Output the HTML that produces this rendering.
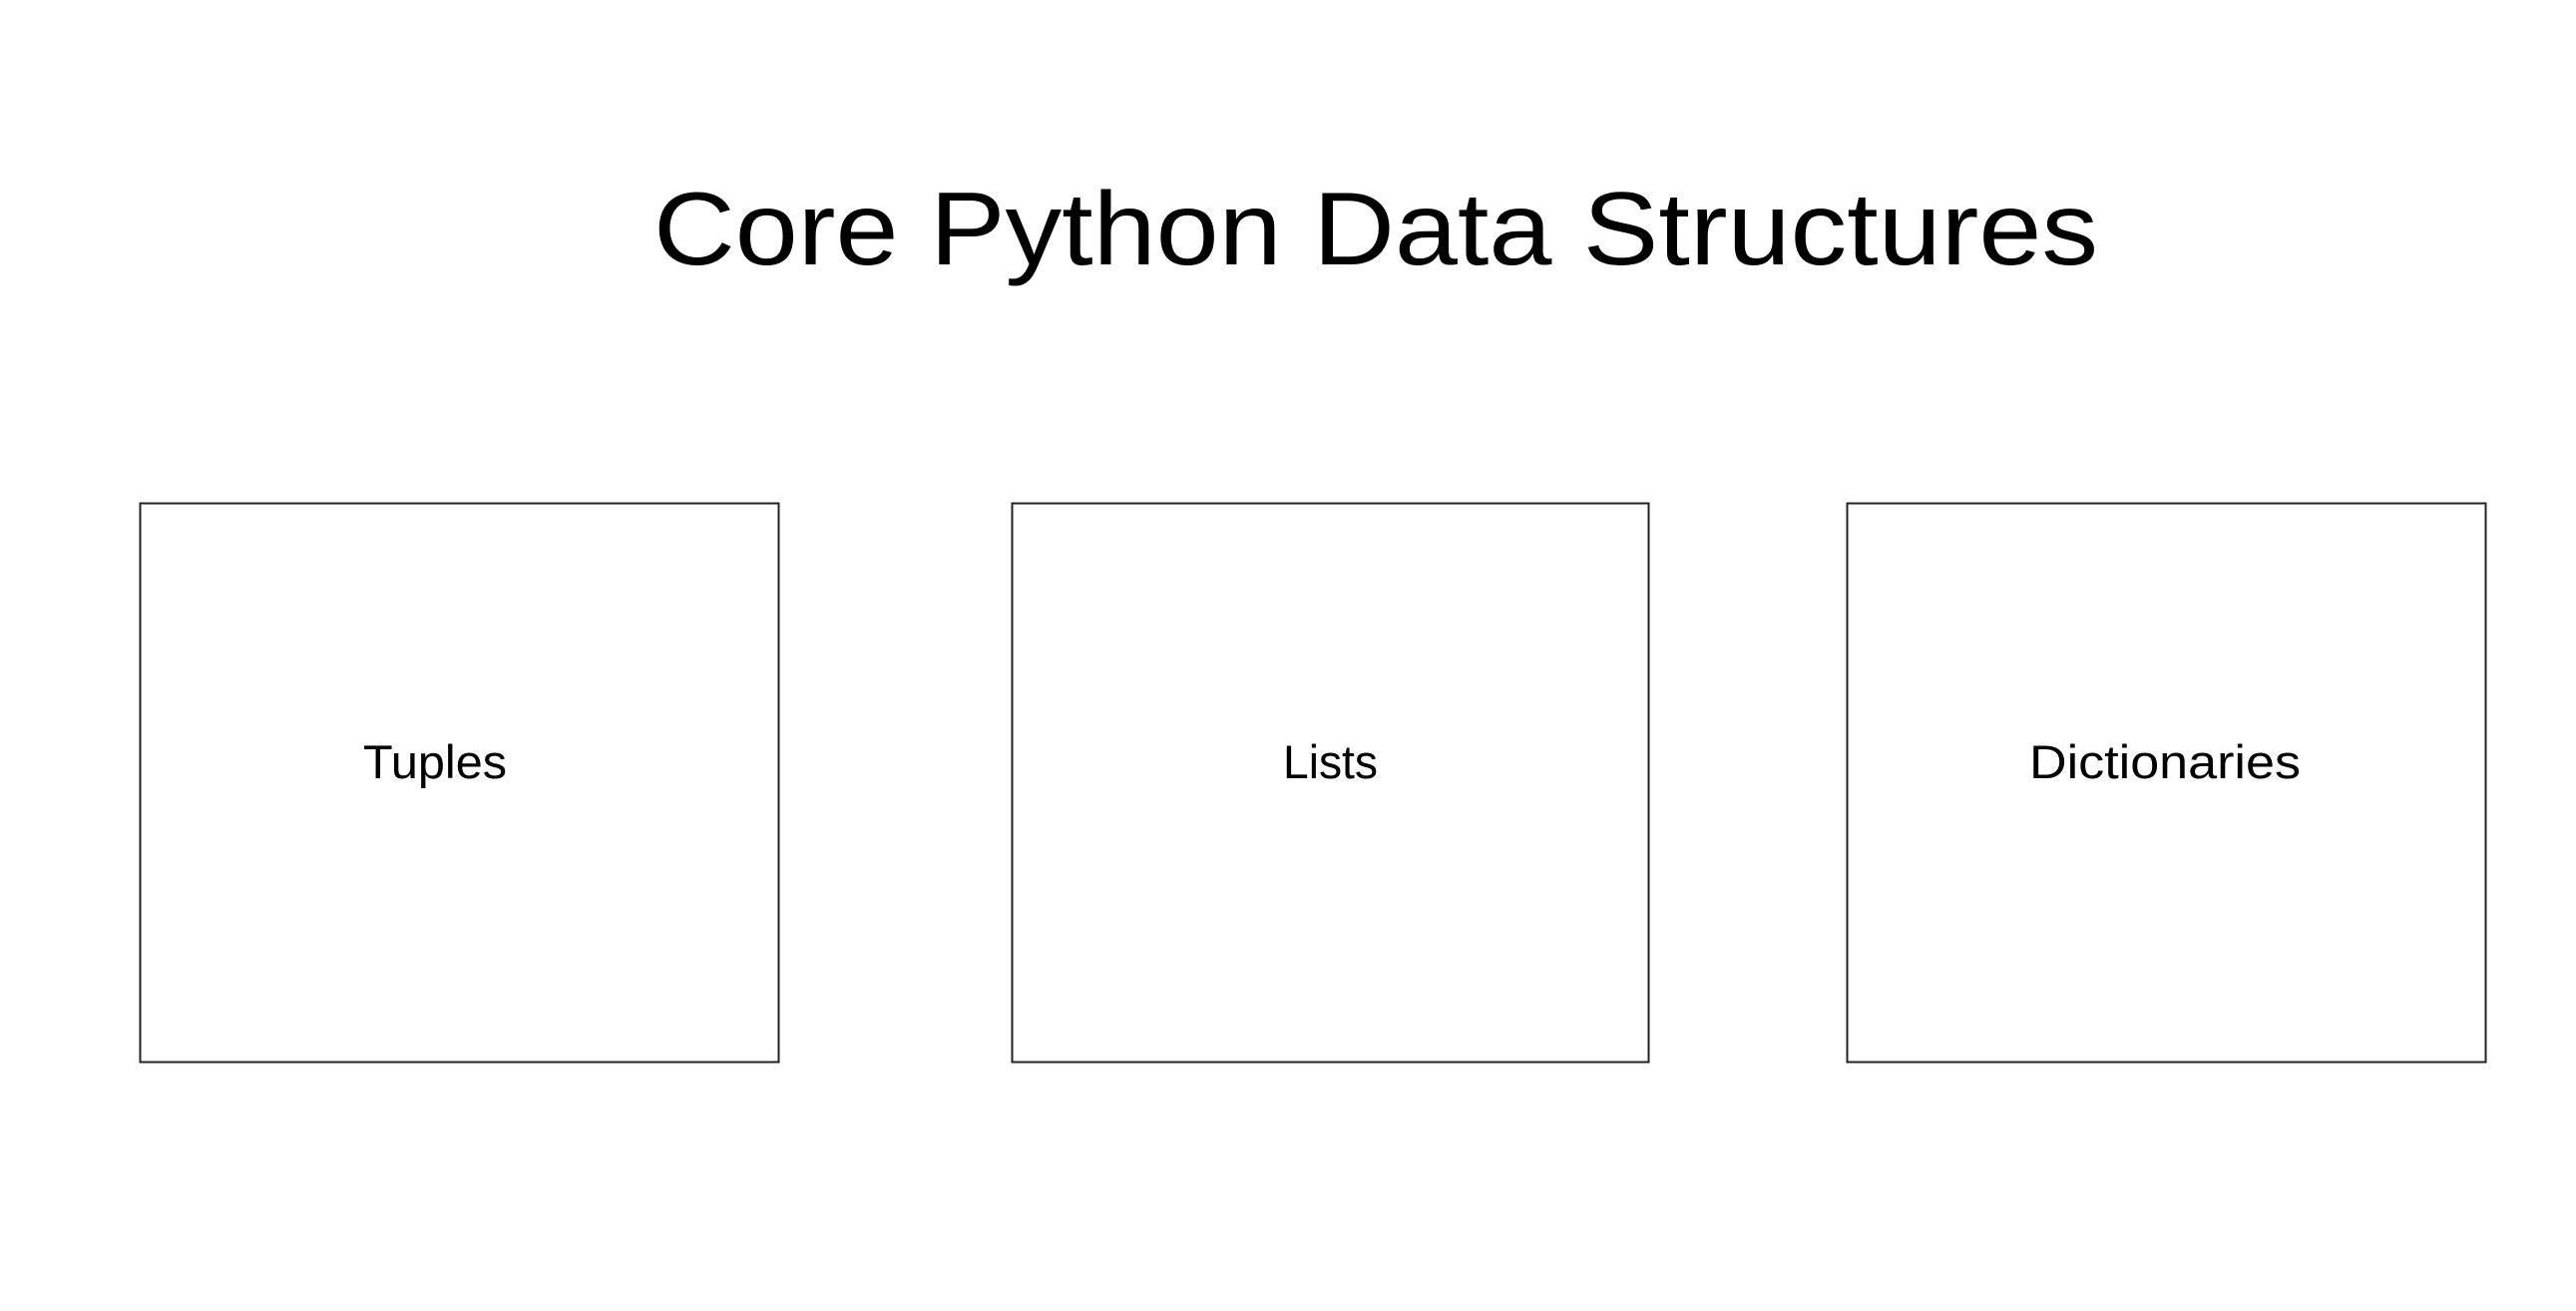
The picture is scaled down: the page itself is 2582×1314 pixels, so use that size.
<!DOCTYPE html>
<html><head><meta charset="utf-8"><style>
html,body{margin:0;padding:0;background:#fff;width:2582px;height:1314px;overflow:hidden}
</style></head><body>
<svg width="2582" height="1314" viewBox="0 0 2582 1314" xmlns="http://www.w3.org/2000/svg" font-family="'Liberation Sans', sans-serif">
<rect width="2582" height="1314" fill="#fff"/>
<text x="655" y="265" font-size="104" fill="#000" textLength="1448" lengthAdjust="spacingAndGlyphs">Core Python Data Structures</text>
<g fill="none" stroke="#222" stroke-width="2">
<rect x="140.5" y="504.5" width="640" height="560"/>
<rect x="1014.5" y="504.5" width="638" height="560"/>
<rect x="1851.5" y="504.5" width="640" height="560"/>
</g>
<g font-size="47" fill="#000">
<text x="364" y="780" textLength="144" lengthAdjust="spacingAndGlyphs">Tuples</text>
<text x="1286" y="780" textLength="95" lengthAdjust="spacingAndGlyphs">Lists</text>
<text x="2034" y="780" textLength="272" lengthAdjust="spacingAndGlyphs">Dictionaries</text>
</g>
</svg>
</body></html>
